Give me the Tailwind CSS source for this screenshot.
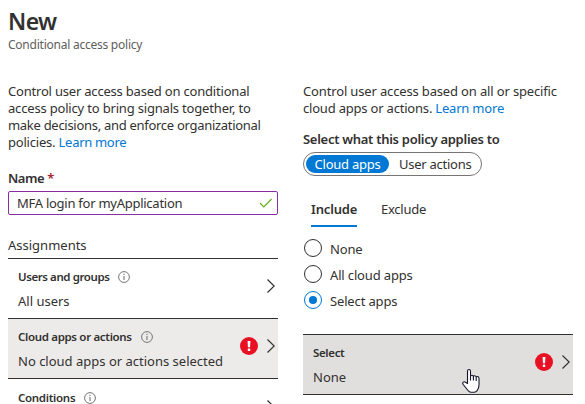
<!DOCTYPE html>
<html lang="en">
<head>
<meta charset="utf-8">
<title>New - Conditional access policy</title>
<script src="https://cdn.jsdelivr.net/npm/@tailwindcss/browser@4"></script>
</head>
<body class="relative h-[404px] w-[585px] overflow-hidden bg-white font-['Noto_Sans','Open_Sans',sans-serif] text-[13px] leading-[17px] text-[#323130]">
<svg class="hidden">
  <symbol id="info" viewBox="0 0 12 12"><circle cx="6" cy="6" r="5.4" fill="none" stroke="#767574" stroke-width="1"/><path d="M6 5v4M6 2.7v1.2" stroke="#767574" stroke-width="1.1"/></symbol>
  <symbol id="chev" viewBox="0 0 8 14"><path d="M.5.5 7.2 7 .5 13.5" fill="none" stroke="#323130" stroke-width="1.2"/></symbol>
  <symbol id="err" viewBox="0 0 18 18"><circle cx="9" cy="9" r="9" fill="#e81123"/><path d="M7.6 4h2.8L10.1 10.3H7.9z" fill="#fff"/><rect x="7.8" y="11.6" width="2.4" height="2.4" rx=".6" fill="#fff"/></symbol>
</svg>
<header class="px-2 pt-[5px]">
  <h1 class="text-[23px] leading-8 font-semibold tracking-[-0.6px]">New</h1>
  <p class="text-[12px] leading-4 tracking-[-0.24px] text-[#605e5c]">Conditional access policy</p>
</header>
<main class="flex gap-[25px] pt-[30px] pl-2 whitespace-nowrap">
  <section class="w-[270px] shrink-0">
    <p class="tracking-[-0.2px]">Control user access based on conditional<br><span class="tracking-[-0.18px]">access policy to bring signals together, to</span><br><span class="tracking-[-0.29px]">make decisions, and enforce organizational</span><br>policies. <a class="tracking-[-0.3px] text-[#0078d4]">Learn more</a></p>
    <div class="mt-[19px] font-semibold tracking-[-0.45px]">Name <span class="text-[#a4262c]">*</span></div>
    <div class="mt-1 flex h-6 items-center justify-between rounded-[2px] border border-[#8a2da5] pr-[5px] pl-2">
      <span class="tracking-[-0.26px]">MFA login for myApplication</span>
      <svg class="h-[10px] w-[13px]" viewBox="0 0 13 10"><path d="M1 5 4.8 8.8 12.6 1" fill="none" stroke="#66ad1a" stroke-width="1.2"/></svg>
    </div>
    <h2 class="mt-[22px] h-[21px]">Assignments</h2>
    <div class="flex h-[60px] items-center border-t border-[#323130] pr-[3px] pl-[10px]">
      <div class="grow pt-px">
        <div class="flex items-center gap-[9px] text-[11.5px] leading-4 font-semibold tracking-[-0.42px]">Users and groups <svg class="size-3"><use href="#info"/></svg></div>
        <div class="mt-2">All users</div>
      </div>
      <svg class="mb-[5px] h-3.5 w-2"><use href="#chev"/></svg>
    </div>
    <div class="flex h-[60px] items-center border-t border-[#323130] bg-[#edebe9] pr-[3px] pl-[10px]">
      <div class="grow pt-px">
        <div class="flex items-center gap-[9px] text-[11.5px] leading-4 font-semibold tracking-[-0.33px]">Cloud apps or actions <svg class="size-3"><use href="#info"/></svg></div>
        <div class="mt-2">No cloud apps or actions selected</div>
      </div>
      <svg class="mr-[9px] mb-[5px] size-[18px]"><use href="#err"/></svg>
      <svg class="mb-[5px] h-3.5 w-2"><use href="#chev"/></svg>
    </div>
    <div class="flex h-[26px] items-start overflow-hidden border-t border-[#323130] pr-[3px] pl-[10px]">
      <div class="flex grow items-center gap-[9px] pt-[11px] text-[11.5px] leading-4 font-semibold tracking-[-0.3px]">Conditions <svg class="size-3"><use href="#info"/></svg></div>
      <svg class="mt-[21px] h-3.5 w-2 shrink-0"><use href="#chev"/></svg>
    </div>
  </section>
  <section class="w-[270px] shrink-0">
    <p class="tracking-[-0.15px]">Control user access based on all or specific<br><span class="tracking-[-0.2px]">cloud apps or actions. <a class="text-[#0078d4]">Learn more</a></span></p>
    <h2 class="mt-[14px] font-semibold tracking-[-0.28px]">Select what this policy applies to</h2>
    <div class="mt-1 flex h-6 w-[179px] items-center rounded-full border border-[#767574] pl-[2px] tracking-[-0.26px]">
      <span class="flex h-[18px] w-[83px] items-center justify-center rounded-full bg-[#0078d4] text-white">Cloud apps</span>
      <span class="pl-[10px]">User actions</span>
    </div>
    <div class="mt-[25px] flex h-[26px] gap-6 pl-2">
      <span class="w-[46px] border-b-2 border-[#0078d4] font-semibold tracking-[-0.15px]">Include</span>
      <span class="tracking-[-0.25px]">Exclude</span>
    </div>
    <div class="mt-[12px] flex flex-col gap-2 pl-px tracking-[-0.15px]">
      <div class="flex h-[18px] items-center gap-2"><i class="size-[18px] rounded-full border border-[#323130]"></i><span class="pt-[3px]">None</span></div>
      <div class="flex h-[18px] items-center gap-2"><i class="size-[18px] rounded-full border border-[#323130]"></i><span class="pt-[3px]">All cloud apps</span></div>
      <div class="flex h-[18px] items-center gap-2"><i class="flex size-[18px] items-center justify-center rounded-full border border-[#0078d4]"><b class="size-2 rounded-full bg-[#0078d4]"></b></i><span class="pt-[3px]">Select apps</span></div>
    </div>
    <div class="mt-[25px] flex h-[61px] items-center border-y border-[#323130] bg-[#e1dfdd] pr-[3px] pl-[10px]">
      <div class="grow pt-px">
        <div class="text-[11.5px] leading-4 font-semibold tracking-[-0.35px]">Select</div>
        <div class="mt-2">None</div>
      </div>
      <svg class="mr-[9px] mb-[5px] size-[18px]"><use href="#err"/></svg>
      <svg class="mb-[5px] h-3.5 w-2"><use href="#chev"/></svg>
    </div>
  </section>
</main>
<svg class="absolute top-[368px] left-[462px] h-[25px] w-[19px]" viewBox="0 0 19 25"><path d="M5.5 15.5V3.2C5.5 .9 8.5 .9 8.5 3.2V8.6c0-1.8 2.9-1.7 2.9.3 0-1.7 2.8-1.5 2.8.6 0-1.5 2.8-1.3 2.8 1V17c0 3-.8 4.2-2 5.8-.7 1-1.5 1.4-2.7 1.4H9c-1.5 0-2.2-.6-3-1.7L1.2 16.5c-1.3-2 .7-3.6 2.3-2.2z" fill="#fff" stroke="#14142b" stroke-width="1.1" stroke-linejoin="round"/><path d="M8.5 8.5v4M11.4 9V12.5M14.2 10V13" stroke="#14142b" stroke-width="1.1"/></svg>
</body>
</html>
